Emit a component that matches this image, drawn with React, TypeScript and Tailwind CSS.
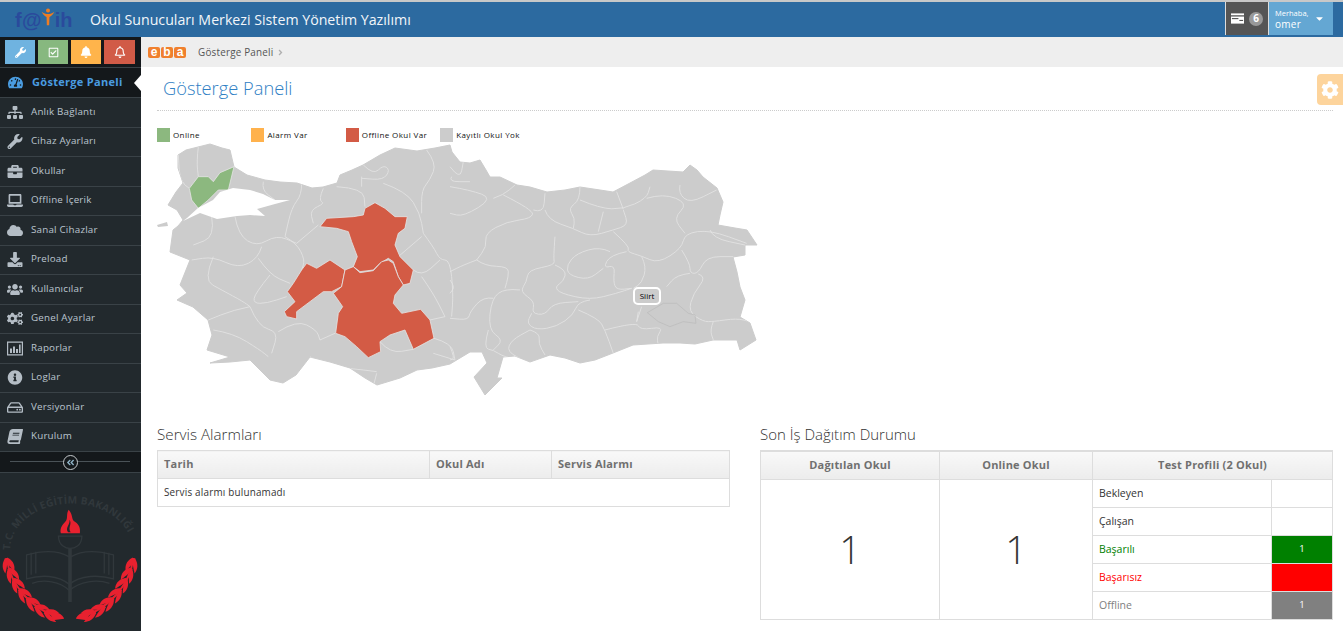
import React from "react";
import {
  FaWrench,
  FaRegCheckSquare,
  FaBell,
  FaRegBell,
  FaTachometerAlt,
  FaSitemap,
  FaBriefcase,
  FaLaptop,
  FaCloud,
  FaDownload,
  FaUsers,
  FaCogs,
  FaInfoCircle,
  FaRegHdd,
  FaBook,
  FaAngleDoubleLeft,
  FaCog,
  FaCaretDown,
  FaAngleRight,
} from "react-icons/fa";

const ReportIcon = ({ className }: { className?: string }) => (
  <svg viewBox="0 0 16 14" className={className} fill="currentColor">
    <path d="M0 0h16v14H0z M1.2 1.2v11.6h13.6V1.2z" fillRule="evenodd" />
    <rect x="3" y="7" width="2" height="4.5" />
    <rect x="6" y="5" width="2" height="6.5" />
    <rect x="9" y="7.5" width="2" height="4" />
    <rect x="12" y="3" width="1.6" height="8.5" />
  </svg>
);

const SlantBook = ({ className }: { className?: string }) => (
  <FaBook className={`${className} -skew-x-12`} />
);

const menu = [
  { name: "Anlık Bağlantı", icon: FaSitemap },
  { name: "Cihaz Ayarları", icon: FaWrench },
  { name: "Okullar", icon: FaBriefcase },
  { name: "Offline İçerik", icon: FaLaptop },
  { name: "Sanal Cihazlar", icon: FaCloud },
  { name: "Preload", icon: FaDownload },
  { name: "Kullanıcılar", icon: FaUsers },
  { name: "Genel Ayarlar", icon: FaCogs },
  { name: "Raporlar", icon: ReportIcon },
  { name: "Loglar", icon: FaInfoCircle },
  { name: "Versiyonlar", icon: FaRegHdd },
  { name: "Kurulum", icon: SlantBook },
];

const legend = [
  { name: "Online", color: "bg-[#8cb87f]" },
  { name: "Alarm Var", color: "bg-[#ffb24d]" },
  { name: "Offline Okul Var", color: "bg-[#d35b45]" },
  { name: "Kayıtlı Okul Yok", color: "bg-[#cccccc]" },
];

// rounds the corners of a traced polyline, province lines are not straight
const smooth = (d: string) =>
  d
    .split("M")
    .filter((s) => s.trim())
    .map((sub) => {
      const closed = sub.includes("Z");
      const pts = sub
        .replace("Z", "")
        .trim()
        .split(/\s*L\s*/)
        .map((p) => p.trim().split(/\s+/).map(Number));
      let out = `M${pts[0][0]} ${pts[0][1]}`;
      for (let i = 1; i < pts.length - 1; i++) {
        const mx = (pts[i][0] + pts[i + 1][0]) / 2;
        const my = (pts[i][1] + pts[i + 1][1]) / 2;
        out += ` Q${pts[i][0]} ${pts[i][1]} ${mx} ${my}`;
      }
      const last = pts[pts.length - 1];
      return `${out} L${last[0]} ${last[1]}${closed ? " Z" : ""}`;
    })
    .join(" ");

// map is traced at 3x, see the two groups in TurkeyMap
const outline =
  "M178 155 L186 150 L198 147 L210 144 L222 148 L230 150 L234 167 L247 175 L265 180 L280 182 L297 183 L312 188 L323 187 L337 183 L340 175 L352 170 L363 165 L380 155 L395 148 L417 151 L435 148 L450 145 L452 152 L460 162 L470 163 L480 160 L486 170 L490 177 L500 177 L517 185 L530 187 L547 192 L565 190 L580 187 L600 190 L613 192 L630 183 L645 175 L653 170 L668 171 L683 172 L690 165 L697 170 L703 177 L717 188 L723 202 L720 215 L718 225 L735 228 L747 230 L757 245 L745 245 L745 255 L733 257 L737 272 L740 287 L745 300 L740 317 L750 323 L756 340 L740 350 L737 340 L713 340 L695 344 L680 343 L663 343 L633 345 L613 353 L595 360 L580 363 L565 358 L550 355 L530 362 L515 356 L503 357 L497 378 L502 378 L485 395 L474 377 L487 363 L482 352 L470 352 L450 364 L432 368 L417 370 L400 378 L377 385 L365 378 L350 368 L330 362 L310 357 L296 375 L283 383 L270 380 L258 368 L250 360 L230 362 L210 363 L230 357 L207 350 L212 335 L208 320 L193 307 L177 300 L187 293 L180 285 L190 260 L170 252 L173 230 L178 226 L183 220 L177 210 L168 205 L176 192 L183 183 L178 168 Z";

const marmara =
  "M183 221 L187 218 L198 208 L213 200 L220 192 L233 188 L250 190 L263 194 L275 200 L290 200 L275 204 L257 209 L265 216 L250 215 L237 216 L217 219 L200 213 Z";

const borders1 = [
  "M145 80 L140 125 L145 170",
  "M118 205 L90 190 L85 105",
  "M340 185 L335 210 L375 240",
  "M455 190 L455 225 L425 262 L405 350",
  "M520 205 L505 240 L525 250 L480 270 L490 310",
  "M560 200 L640 205 L645 260",
  "M635 170 L635 200 M640 135 L670 165 L700 135 L720 150 L700 180 L635 175",
  "M700 190 L770 215 L810 280 L820 340",
  "M830 90 L860 130 L840 180 L815 210 L815 280",
  "M905 170 L895 185 L960 185",
  "M185 290 L195 350 L130 375",
  "M255 290 L265 345 L320 380 L380 345 L440 370",
  "M405 350 L440 370 L465 420 L455 450",
  "M440 370 L505 315",
  "M335 380 L325 415 L265 445 L190 410 L125 420",
  "M325 415 L360 465 L420 490",
  "M190 410 L160 480 L215 510 L280 545 L300 560",
  "M360 465 L315 520 L310 550 L350 550 L410 530",
  "M300 560 L250 570 L175 600",
  "M300 560 L325 620 L385 635 L365 700",
  "M190 630 L250 640 L330 690 L355 710",
  "M385 635 L440 600 L500 630 L510 660",
  "M510 660 L555 640",
  "M820 340 L850 380 L870 420 L900 420 L910 520 L905 590",
  "M815 350 L745 410",
  "M815 470 L850 520 L885 590",
  "M790 450 L815 470 L870 420",
  "M852 655 L905 670 L915 720",
  "M885 590 L840 600",
  "M480 710 L520 740 L600 745 L680 755",
  "M680 760 L670 800",
  "M690 665 L720 700 L790 688",
  "M915 720 L850 700",
];

const borders2 = [
  "M0 110 L30 150 L40 95",
  "M0 170 L60 180 L130 205 L40 260 L0 250",
  "M130 205 L160 195 L195 165",
  "M160 195 L250 240 L245 265 L170 275 L105 310 L110 350 L80 390",
  "M250 240 L280 250 L285 190",
  "M285 240 L295 270 L370 295 L420 320 L490 300 L535 285 L520 240",
  "M390 170 L390 210 L355 235 L375 265 L370 295",
  "M390 210 L450 235 L520 238 L590 205 L600 170",
  "M500 185 L520 238",
  "M460 245 L445 305",
  "M590 205 L640 190 L715 220 L670 265 L705 310",
  "M690 165 L685 190 L720 220 L800 180",
  "M490 305 L540 350 L530 365 L575 378 L625 400 L695 355 L705 310 L780 300 L890 340",
  "M780 300 L790 325 L885 345",
  "M695 360 L720 400 L720 430 L745 430 L770 380 L850 380",
  "M745 432 L770 440 L730 490 L715 545 L760 575 L790 575 L860 565 L900 575",
  "M720 430 L680 435 L650 470",
  "M575 380 L590 410 L575 460 L550 475",
  "M530 365 L480 375 L460 415 L495 405 L490 455 L500 480 L545 475",
  "M480 365 L450 350 L380 370 L350 405 L355 435 L415 450 L460 415",
  "M315 320 L310 385 L315 405 L235 420 L230 455 L210 485 L255 515 L245 550 L285 555 L310 520 L385 515",
  "M315 405 L350 420 L340 455 L315 470 L330 490 L420 510 L500 490 L545 475",
  "M420 510 L385 515 L370 555 L320 590 L260 600 L230 580 L245 550",
  "M385 540 L445 565 L465 600 L490 670",
  "M465 600 L560 575 L570 600 L640 590 L620 620 L625 645",
  "M565 545 L560 575 M575 530 L560 575",
  "M790 575 L780 600 L790 630",
  "M210 480 L165 475 L125 505 L115 600 L160 630 L130 660",
  "M115 600 L100 655 L130 660 L160 680 L230 695 L170 665 L185 630 L240 600",
  "M130 505 L100 500 L60 545 L55 570 L0 565",
  "M80 390 L105 408 L175 410 L175 440 L165 475",
  "M80 390 L40 405 L0 425",
  "M240 600 L270 610 L265 640 L285 675",
  "M0 450 L15 470 L0 490 M0 650 L15 685 L0 690",
];

const TurkeyMap = () => (
  <svg viewBox="150 140 610 260" className="w-[610px] h-[260px] block" aria-label="Türkiye haritası">
    <defs>
      <clipPath id="tr-clip">
        <path d={outline} />
      </clipPath>
    </defs>
    <path d={outline} fill="#cccccc" stroke="#cccccc" strokeLinejoin="round" />
    <path d="M157 225 L167 222 L168 226 L158 227 Z" fill="#cccccc" />
    <g clipPath="url(#tr-clip)">
      <g transform="translate(150 120) scale(0.3333)" fill="none" stroke="#e4e4e4" strokeWidth="2.4" strokeLinejoin="round">
        {borders1.map((d) => (
          <path key={d} d={smooth(d)} />
        ))}
      </g>
      <g transform="translate(450 130) scale(0.3333)" fill="none" stroke="#e4e4e4" strokeWidth="2.4" strokeLinejoin="round">
        {borders2.map((d) => (
          <path key={d} d={smooth(d)} />
        ))}
        <path
          stroke="#bdbdbd"
          d="M592 548 L640 520 L680 520 L715 550 L735 555 L738 580 L700 575 L660 590 L625 575 Z"
        />
      </g>
    </g>
    <g transform="translate(150 120) scale(0.3333)" stroke="#e4e4e4" strokeWidth="2.4" strokeLinejoin="round">
      <path
        fill="#8cb87f"
        d="M118 205 L145 170 L175 170 L190 185 L210 158 L252 140 L235 210 L205 210 L175 240 L145 265 L125 240 Z"
      />
      <path
        fill="#d35b45"
        d="M510 320 L530 295 L610 290 L640 285 L645 265 L675 248 L705 265 L735 290 L772 290 L765 325 L745 340 L735 375 L750 410 L790 450 L780 490 L760 495 L745 470 L730 425 L715 415 L690 430 L670 450 L630 455 L610 440 L622 410 L605 365 L595 335 L560 325 Z"
      />
      <path
        fill="#d35b45"
        d="M470 430 L500 445 L540 420 L585 450 L575 500 L545 515 L520 515 L480 545 L440 575 L440 597 L410 590 L403 575 L435 545 L412 515 L430 490 L455 450 Z"
      />
      <path
        fill="#d35b45"
        d="M610 440 L630 458 L670 452 L695 425 L715 420 L730 430 L745 470 L760 495 L735 525 L730 550 L755 580 L812 568 L840 600 L852 655 L790 688 L765 630 L720 645 L690 665 L692 695 L655 713 L620 680 L585 650 L557 640 L565 580 L578 560 L550 520 L575 500 L585 450 Z"
      />
    </g>
    <path d={marmara} fill="#ffffff" />
  </svg>
);

const leaves = [
  [22, 342, 75],
  [34, 372, 65],
  [50, 402, 58],
  [70, 432, 50],
  [95, 458, 42],
  [122, 478, 32],
  [152, 493, 22],
];

const Emblem = () => (
  <svg viewBox="0 63 423 480" className="w-[141px] h-[160px] block">
    <defs>
      <path id="emblem-arc" d="M28 298 A186 142 0 0 1 400 298" />
    </defs>
    <text fill="#31383c" fontSize="31" fontWeight="700" fontFamily="'Open Sans', sans-serif" letterSpacing="0.8">
      <textPath href="#emblem-arc">T.C. MİLLİ EĞİTİM BAKANLIĞI</textPath>
    </text>
    {/* book and torch */}
    <g fill="none" stroke="#31383c" strokeWidth="4">
      <path d="M208 318 C170 295 120 300 78 312 L78 385 C120 372 175 372 208 402 C240 372 300 372 342 385 L342 312 C300 300 250 295 212 318" />
      <path d="M92 305 L92 372 M106 302 L106 368 M328 305 L328 372 M314 302 L314 368" />
      <path d="M95 398 C130 385 180 392 208 420 C240 392 290 385 330 398" />
      <path d="M175 255 C175 285 200 292 210 292 C222 292 246 285 246 255 Z" />
      <path d="M210 292 L210 455" strokeWidth="11" />
    </g>
    {/* flame */}
    <path
      fill="#e8212f"
      d="M206 175 C222 195 212 205 226 212 C238 220 242 232 240 246 L182 246 C178 228 190 218 198 208 C204 198 198 188 206 175 Z"
    />
    <path fill="#22292d" d="M208 205 C218 218 202 228 212 243 L204 243 C194 228 212 220 208 205 Z" />
    {/* laurel */}
    {[0, 1].map((side) => (
      <g key={side} transform={side ? "translate(420 0) scale(-1 1)" : undefined} fill="#e8212f">
        <path
          d="M18 325 C28 400 90 480 188 504"
          fill="none"
          stroke="#e8212f"
          strokeWidth="6"
        />
        {leaves.map(([x, y, r]) => (
          <g key={x} transform={`translate(${x} ${y}) rotate(${r}) scale(1.05)`}>
            <path d="M-20 -4 C-6 -20 12 -18 22 -12 C10 -6 0 0 -20 6 Z" />
            <path d="M-20 4 C-8 18 10 20 22 14 C12 8 0 2 -20 -4 Z" />
          </g>
        ))}
        <path d="M150 488 C170 484 186 490 192 506 L158 510 Z" />
      </g>
    ))}
  </svg>
);

const App: React.FC = () => {
  const thClass =
    "h-[28px] border border-[#dddddd] bg-gradient-to-b from-[#f9f9f9] to-[#ececec] text-[11px] font-bold text-[#707070] tracking-[0.2px]";
  const profileRows = [
    { name: "Bekleyen", text: "text-[#333333]", cell: "", value: "" },
    { name: "Çalışan", text: "text-[#333333]", cell: "", value: "" },
    { name: "Başarılı", text: "text-[#008000]", cell: "bg-[#008000]", value: "1" },
    { name: "Başarısız", text: "text-[#ff0000]", cell: "bg-[#ff0000]", value: "" },
    { name: "Offline", text: "text-[#808080]", cell: "bg-[#808080]", value: "1" },
  ];

  return (
    <div className="h-[631px] w-[1343px] overflow-hidden flex flex-col bg-white font-['Open_Sans',sans-serif] text-[#333333]">
      <header className="h-[37px] flex-none bg-[#2c6aa0] flex items-start border-t-2 border-t-[#c8c8c8]">
        <div className="w-[90px] flex-none pl-[15px] flex items-center h-[35px]">
          <span className="text-[20px] font-bold leading-none text-[#2a4a9c] font-['Liberation_Sans',sans-serif] tracking-[0.3px]">
            f@
          </span>
          <svg viewBox="0 0 24 30" className="w-[14px] h-[18px] -mt-[5px] -ml-px">
            <circle cx="12" cy="4" r="3.4" fill="#ef7d22" />
            <path d="M1 6 C6 10 9 10 12 10 C15 10 18 10 23 6 C20 12 16 14 14.5 15 L14 29 L10 29 L9.5 15 C8 14 4 12 1 6 Z" fill="#ef7d22" />
          </svg>
          <span className="text-[20px] font-bold leading-none text-[#2a4a9c] font-['Liberation_Sans',sans-serif]">
            ih
          </span>
        </div>
        <h1 className="text-[14.2px] leading-[35px] text-[#f2f6fa] font-normal">
          Okul Sunucuları Merkezi Sistem Yönetim Yazılımı
        </h1>
        <div className="ml-auto flex h-[33px] items-stretch">
          <div className="w-[44px] bg-[#555555] border-x border-x-[#dddddd] flex items-center justify-center gap-[5px]">
            <svg viewBox="0 0 14 11" className="w-[13px] h-[11px]">
              <rect x="0" y="0" width="14" height="11" fill="#ffffff" />
              <rect x="0" y="2" width="14" height="1.4" fill="#555555" />
              <rect x="1" y="5" width="7" height="1.2" fill="#555555" />
              <rect x="9" y="7" width="4" height="1.2" fill="#555555" />
            </svg>
            <span className="w-[14px] h-[14px] rounded-full bg-[#999999] text-white text-[10px] font-bold flex items-center justify-center">
              6
            </span>
          </div>
          <div className="w-[64px] bg-[#64a7d3] flex items-center pl-[6px] text-white">
            <div className="leading-[10px]">
              <div className="text-[7.5px]">Merhaba,</div>
              <div className="text-[10px] mt-[1px] tracking-[0.3px]">omer</div>
            </div>
            <FaCaretDown className="w-[11px] h-[11px] ml-[5px]" />
          </div>
          <div className="w-[10px]" />
        </div>
      </header>

      <div className="flex-1 flex min-h-0">
        <aside className="w-[141px] flex-none bg-[#22292d] flex flex-col">
          <div className="h-[30px] flex-none bg-[#14181b] flex items-center gap-[3px] pl-[5px]">
            <button className="w-[30px] h-[24px] bg-[#6fb3e0] text-white flex items-center justify-center">
              <FaWrench className="w-[11px] h-[11px]" />
            </button>
            <button className="w-[30px] h-[24px] bg-[#87b87f] text-white flex items-center justify-center">
              <FaRegCheckSquare className="w-[11px] h-[11px]" />
            </button>
            <button className="w-[30px] h-[24px] bg-[#ffb44b] text-white flex items-center justify-center">
              <FaBell className="w-[12px] h-[12px]" />
            </button>
            <button className="w-[31px] h-[24px] bg-[#d15b47] text-white flex items-center justify-center">
              <FaRegBell className="w-[12px] h-[12px]" />
            </button>
          </div>
          <a className="h-[30px] flex-none bg-[#14181b] border-t border-t-[#3a4247] flex items-center pl-[8px] relative">
            <FaTachometerAlt className="w-[15px] h-[15px] text-[#4a9ce0]" />
            <span className="ml-[9px] text-[11px] font-bold text-[#4a9ce0] tracking-[0.3px]">Gösterge Paneli</span>
            <span className="absolute right-0 top-[7px] w-0 h-0 border-y-[8px] border-y-transparent border-r-[7px] border-r-white" />
          </a>
          {menu.map((item) => (
            <a
              key={item.name}
              className="h-[29.5px] flex-none border-t border-t-[#3a4247] flex items-center pl-[7px] text-[#bcc6cf]"
            >
              <span className="w-[16px] flex justify-center">
                <item.icon className="w-[16px] h-[15px] text-[#b4bdc5]" />
              </span>
              <span className="ml-[8px] text-[9.8px] tracking-[0.2px]">{item.name}</span>
            </a>
          ))}
          <div className="h-[22px] flex-none bg-[#14181b] border-y border-y-[#3a4247] flex items-center justify-center relative">
            <div className="absolute left-[10px] right-[11px] top-[9px] h-px bg-[#4a5257]" />
            <span className="relative w-[15px] h-[15px] rounded-full border border-[#c4c9cc] bg-[#14181b] flex items-center justify-center">
              <FaAngleDoubleLeft className="w-[9px] h-[9px] text-[#8fb4c8]" />
            </span>
          </div>
          <Emblem />
        </aside>

        <main className="flex-1 min-w-0 flex flex-col">
          <div className="h-[30px] flex-none bg-[#eeeeee] flex items-center pl-[7px]">
            <span className="flex gap-px">
              {["e", "b", "a"].map((c) => (
                <span
                  key={c}
                  className="w-[12px] h-[11px] rounded-[2px] bg-[#f0802e] text-white text-[12px] font-bold leading-[9px] flex items-center justify-center font-['Liberation_Sans',sans-serif]"
                >
                  {c}
                </span>
              ))}
            </span>
            <span className="ml-[12px] text-[9.9px] text-[#555555] tracking-[0.2px]">Gösterge Paneli</span>
            <FaAngleRight className="ml-[3px] w-[9px] h-[9px] text-[#b0b0b0]" />
          </div>

          <div className="flex-1 relative pl-[16px] pr-[10px]">
            <button className="absolute right-0 top-[7px] w-[26px] h-[31px] rounded-l-[4px] bg-[#fdd49c] text-white flex items-center justify-center">
              <FaCog className="w-[18px] h-[18px]" />
            </button>
            <div className="h-[44px] border-b border-dotted border-b-[#cccccc] pl-[6px] pt-[8px]">
              <h2 className="text-[18.3px] leading-[25px] font-light text-[#2f80c4]">Gösterge Paneli</h2>
            </div>
            <div className="flex mt-[16px] h-[15px] items-center">
              {legend.map((l) => (
                <div key={l.name} className="w-[94.4px] flex items-center gap-[3px]">
                  <span className={`w-[13px] h-[14px] flex-none ${l.color}`} />
                  <span className="text-[8px] text-[#111111] tracking-[0.4px] whitespace-nowrap">{l.name}</span>
                </div>
              ))}
            </div>
            <div className="relative -ml-[7px] -mt-[2px]">
              <TurkeyMap />
              <span className="absolute left-[483px] top-[147px] w-[28px] h-[18px] rounded-[5px] border-2 border-white bg-[#cccccc] text-[8px] text-black flex items-center justify-center">
                Siirt
              </span>
            </div>

            <div className="flex mt-[25px]">
              <section className="w-[573px] flex-none">
                <h3 className="text-[15.2px] leading-[19px] pb-px font-light text-[#333333]">Servis Alarmları</h3>
                <table className="mt-[5px] w-full table-fixed border-collapse border border-[#dddddd] text-[9.9px]">
                  <colgroup>
                    <col className="w-[272px]" />
                    <col className="w-[122px]" />
                    <col />
                  </colgroup>
                  <thead>
                    <tr>
                      <th className={`${thClass} text-left pl-[6px]`}>Tarih</th>
                      <th className={`${thClass} text-left pl-[6px]`}>Okul Adı</th>
                      <th className={`${thClass} text-left pl-[6px]`}>Servis Alarmı</th>
                    </tr>
                  </thead>
                  <tbody>
                    <tr>
                      <td colSpan={3} className="h-[28px] pl-[6px] text-[#333333] tracking-[0.2px]">
                        Servis alarmı bulunamadı
                      </td>
                    </tr>
                  </tbody>
                </table>
              </section>

              <section className="ml-[30px] w-[573px] flex-none">
                <h3 className="text-[15px] leading-[19px] pb-px font-light text-[#333333]">Son İş Dağıtım Durumu</h3>
                <table className="mt-[5px] w-full table-fixed border-collapse border border-[#dddddd] border-t-2 text-[10.5px]">
                  <colgroup>
                    <col className="w-[179px]" />
                    <col className="w-[153px]" />
                    <col className="w-[179px]" />
                    <col />
                  </colgroup>
                  <thead>
                    <tr>
                      <th className={thClass}>Dağıtılan Okul</th>
                      <th className={thClass}>Online Okul</th>
                      <th colSpan={2} className={thClass}>
                        Test Profili (2 Okul)
                      </th>
                    </tr>
                  </thead>
                  <tbody>
                    {profileRows.map((row, i) => (
                      <tr key={row.name}>
                        {i === 0 && (
                          <>
                            <td rowSpan={5} className="border border-[#dddddd] text-center text-[38px] font-light text-[#333333]">
                              1
                            </td>
                            <td rowSpan={5} className="border border-[#dddddd] text-center text-[38px] font-light text-[#333333]">
                              1
                            </td>
                          </>
                        )}
                        <td className={`h-[28px] border border-[#dddddd] pl-[6px] pt-px ${row.text}`}>{row.name}</td>
                        <td className={`border border-[#dddddd] text-center text-[9.5px] text-white ${row.cell}`}>{row.value}</td>
                      </tr>
                    ))}
                  </tbody>
                </table>
              </section>
            </div>
          </div>
        </main>
      </div>
    </div>
  );
};

export default App;
